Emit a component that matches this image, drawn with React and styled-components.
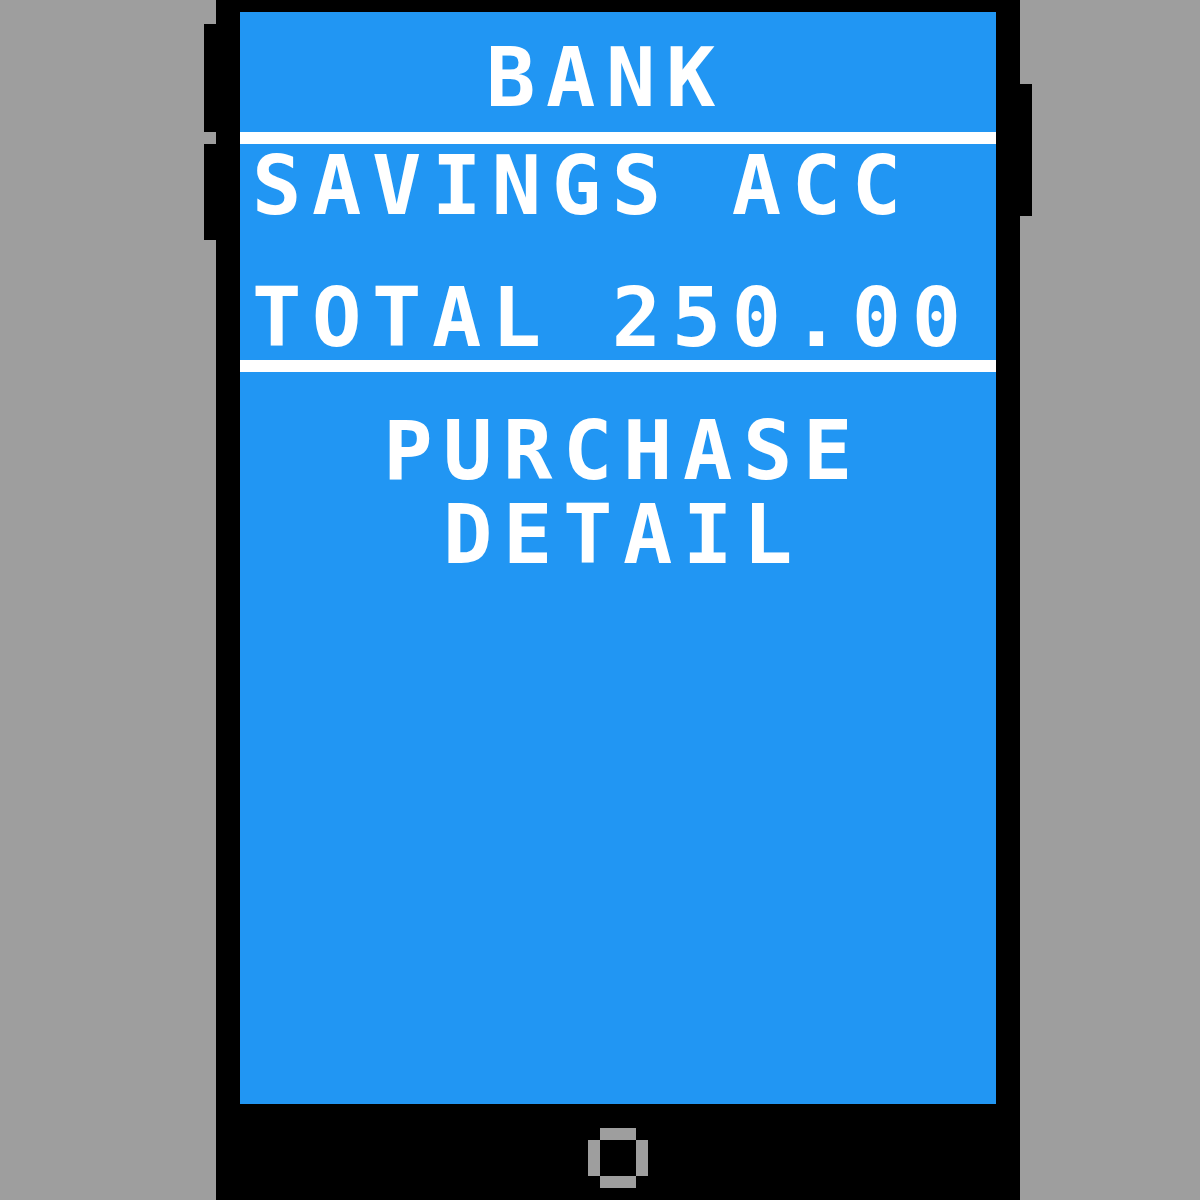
import React from "react"
import styled, { createGlobalStyle } from "styled-components"

const GlobalStyle = createGlobalStyle`
  html, body {
    margin: 0;
    padding: 0;
    background: #9e9e9e;
    overflow: hidden;
  }
`

// pixel grid unit = 12px, glyph advance = 5 units
const Page = styled.div`
  display: flex;
  align-items: flex-start;
  width: 1200px;
  height: 1200px;
  padding-left: 204px;
  box-sizing: border-box;
  background: #9e9e9e;
`

const Rail = styled.div`
  display: flex;
  flex-direction: column;
  gap: 12px;
  width: 12px;
  padding-top: ${p => p.$top}px;
`

const SideButton = styled.div`
  width: 12px;
  height: ${p => p.$h}px;
  background: #000;
`

const Phone = styled.div`
  display: flex;
  flex-direction: column;
  width: 804px;
  height: 1200px;
  box-sizing: border-box;
  padding: 12px 24px 0;
  background: #000;
`

const Screen = styled.div`
  display: flex;
  flex-direction: column;
  height: 1092px;
  background: #2196f3;
  color: #fff;
  font-family: "DejaVu Sans Mono", "Liberation Mono", monospace;
  font-weight: bold;
  font-size: 82px;
  line-height: 60px;
  letter-spacing: 10.6px;
  white-space: pre;
`

const Header = styled.div`
  padding: 36px 24px 24px 0;
  text-align: center;
`

const Divider = styled.div`
  height: 12px;
  background: #fff;
`

const Account = styled.div`
  display: flex;
  flex-direction: column;
  gap: 72px;
  padding: 12px 12px;
`

const Detail = styled.div`
  padding-top: 37px;
  margin-right: -10px;
  line-height: 84px;
  text-align: center;
`

const Line = styled.div`
  height: 60px;
`

const Bezel = styled.div`
  display: flex;
  justify-content: center;
  padding-top: 24px;
`

const HomeButton = () => (
  <svg width="60" height="60" viewBox="0 0 5 5" shapeRendering="crispEdges">
    <path
      d="M1 0h3v1h1v3h-1v1h-3v-1h-1v-3h1z M1 1v3h3v-3z"
      fill="#9e9e9e"
      fillRule="evenodd"
    />
  </svg>
)

const App = () => {
  return (
    <>
      <GlobalStyle />
      <Page>
        <Rail $top={24}>
          <SideButton $h={108} />
          <SideButton $h={96} />
        </Rail>
        <Phone>
          <Screen>
            <Header>BANK</Header>
            <Divider />
            <Account>
              <Line>SAVINGS ACC</Line>
              <Line>TOTAL 250.00</Line>
            </Account>
            <Divider />
            <Detail>
              PURCHASE
              <br />
              DETAIL
            </Detail>
          </Screen>
          <Bezel>
            <HomeButton />
          </Bezel>
        </Phone>
        <Rail $top={84}>
          <SideButton $h={132} />
        </Rail>
      </Page>
    </>
  )
}

export default App
